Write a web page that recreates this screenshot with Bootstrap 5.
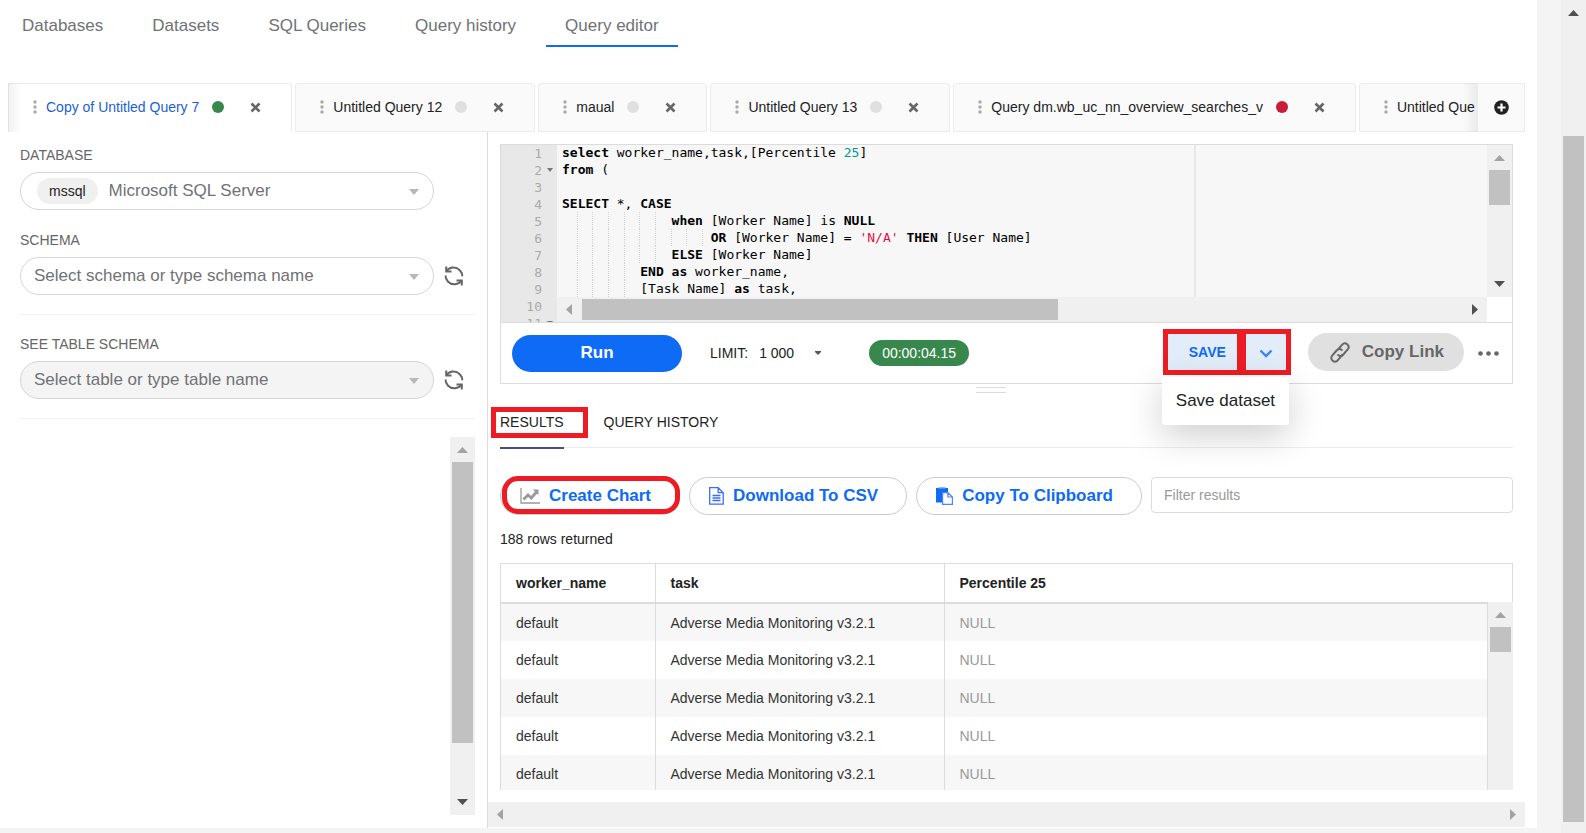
<!DOCTYPE html>
<html lang="en">
<head>
<meta charset="utf-8">
<meta name="viewport" content="width=device-width, initial-scale=1">
<title>Query editor</title>
<link href="https://cdn.jsdelivr.net/npm/bootstrap@5.3.0/dist/css/bootstrap.min.css" rel="stylesheet">
<style>
:root { --ink: #222; --soft: #666; --line: #dcdcdc; --brand: #0d6bf5; --note: #ed1c24; --bar: #f0f0f0; --thumb: #c1c1c1; }
body { font-family: "Liberation Sans", Arial, sans-serif; font-size: 14px; line-height: 20px; color: var(--ink); background: #f4f4f4; }
.app { height: 100vh; }
.page { margin-bottom: 5px; padding-right: 12px; margin-right: 24px; min-width: 0; }

/* top navigation */
.topnav { gap: 11px; padding-left: 3px; margin-bottom: 36px; }
.topnav .nav-link { font-size: 17px; line-height: 20px; color: #707275; padding: 16px 19px 9px; border-bottom: 2px solid transparent; }
.topnav .nav-link.active { border-color: var(--brand); }

/* query tabs */
.strip { margin-left: 8px; height: 49px; }
.strip-scroll { gap: 3px; min-width: 0; }
.strip-scroll::before, .strip-scroll::after { content: ""; position: absolute; top: 0; bottom: 0; width: 14px; z-index: 1; pointer-events: none; }
.strip-scroll::before { left: 0; background: linear-gradient(90deg, rgba(0,0,0,.05), transparent); border-left: 1px solid #e2e2e2; }
.strip-scroll::after { right: 0; background: linear-gradient(270deg, rgba(0,0,0,.06), transparent); }
.qtab { background: #fafafa; border: 1px solid #ececec; border-radius: 3px 3px 0 0; padding: 0 26px 1px 24px; white-space: nowrap; }
.qtab.current { background: #fff; border-bottom-color: #fff; }
.qtab a { font-size: 14px; color: var(--ink); text-decoration: none; margin-left: 9px; }
.qtab.current a { color: #1a5fd8; }
.state { width: 12px; height: 12px; border-radius: 50%; background: #e0e0e0; margin-left: 13px; }
.state.ok { background: #38884d; }
.state.bad { background: #c91c3b; }
.plain { background: none; border: 0; padding: 0; line-height: 0; color: var(--soft); }
.qtab .plain { margin-left: 22px; padding: 4px; }
.add { width: 48px; background: #fafafa; border: 1px solid #ececec; color: var(--ink); }

/* scrollbars */
.sbar { background: var(--bar); color: #505050; flex: none; overflow: hidden; }
.sbar .off { color: #a3a3a3; }
.sbar svg { flex: none; }
.sbar i { background: var(--thumb); }
.sbar.v { width: 25px; display: flex; flex-direction: column; align-items: center; justify-content: space-between; }
.sbar.v i { width: 21px; }
.sbar.h { height: 25px; display: flex; align-items: center; justify-content: space-between; }
.sbar.h i { height: 21px; }
.page-bar { padding-bottom: 11px; }
.page-bar .top { margin-bottom: 111px; }

/* sidebar */
.side { width: 488px; padding: 13px 12px 13px 20px; border-right: 1px solid var(--line); flex: none; }
.side label { font-size: 14px; color: var(--soft); margin-bottom: 7px; }
.combo { height: 38px; border: 1px solid #d5d5d5; border-radius: 19px; flex: 1 1 0; min-width: 0; padding-left: 13px; background: #fff; }
.combo .form-select { height: 36px; border: 0; border-radius: 19px; padding: 0 36px 0 0; font-size: 17px; line-height: 20px; color: #707275; box-shadow: none;
  background: transparent url("data:image/svg+xml,%3Csvg xmlns='http://www.w3.org/2000/svg' viewBox='0 0 10 6'%3E%3Cpath fill='%23b8b8b8' d='M0 0h10L5 6z'/%3E%3C/svg%3E") no-repeat right 14px top 16px / 10px 6px; }
.combo.idle { background: #f4f4f4; }
.engine { background: #f0f0f0; border-radius: 13px; font-size: 14px; line-height: 26px; padding: 0 12px; margin: 0 11px 0 3px; }
.side hr { margin: 19px 0 18px; border-color: #e9e9e9; opacity: .6; }
.side hr + label { margin-top: 1px; }
.refresh { width: 41px; padding-left: 10px; text-align: left; flex: none; }

/* SQL editor */
.work { padding: 12px 12px 0; min-width: 0; }
.panel { border: 1px solid var(--line); }
.sql { height: 178px; border-bottom: 1px solid var(--line); overflow: hidden; font-family: "DejaVu Sans Mono", monospace; font-size: 13px; line-height: 17px; }
.gutter { width: 56px; background: #e8e8e8; color: #aaa; margin: 0; list-style: none; padding: 0; text-align: right; flex: none; }
.gutter li { padding-right: 15px; position: relative; }
.gutter .fold::after { content: ""; position: absolute; right: 4px; top: 6px; border: 3px solid transparent; border-top: 4px solid #777; border-bottom: 0; }
.code-view { background: #f7f7f7; min-width: 0; flex: 1 1 0; }
.code-view pre { margin: -1px 0 0; padding-left: 5px; font: inherit; color: #000; width: 639px; border-right: 2px solid #e8e8e8; overflow: hidden; flex: none; }
.ig { background: linear-gradient(#d0d0d0 50%, transparent 50%) right top / 1px 2px repeat-y; padding: 1px 0; }
.num { color: #099; }
.str { color: #d14; }
.tools { height: 60px; padding: 0 13px 0 11px; }
.run { width: 170px; height: 37px; border-radius: 19px; background: var(--brand); color: #fff; font-size: 17px; font-weight: 700; line-height: 20px; padding: 0; margin-right: 28px; }
.limit-label { font-size: 14px; margin-right: 11px; }
.limit { width: 65px; border: 0; padding: 0; font-size: 14px; line-height: 20px; color: var(--ink); appearance: none; background: url("data:image/svg+xml,%3Csvg xmlns='http://www.w3.org/2000/svg' viewBox='0 0 6 4'%3E%3Cpath fill='%23555' d='M0 0h6v1L3 4 0 1z'/%3E%3C/svg%3E") no-repeat right 3px center / 6px 4px; }
.timer { background: #38884d; color: #fff; border-radius: 13px; line-height: 26px; padding: 0 13px; margin-left: 45px; }
.save, .copy { margin-bottom: 2px; }
.save .btn { height: 46px; border: 5px solid var(--note); border-radius: 0; background: #e3edfa; color: var(--brand); font-size: 14px; font-weight: 700; line-height: 20px; padding: 0; }
.save .btn.main { width: 79px; padding-left: 10px; }
.save .btn.more { width: 50px; margin-left: 0; }
.save .dropdown-menu { top: 48px; left: -1px; min-width: 127px; padding: 14px 0; border: 0; border-radius: 3px; box-shadow: 0 10px 36px rgba(0,0,0,.2); margin: 0; }
.save .dropdown-item { font-size: 17px; line-height: 20px; padding: 0 14px; color: var(--ink); }
.copy { height: 38px; border-radius: 19px; background: #e0e0e0; color: var(--soft); font-size: 17px; font-weight: 700; line-height: 20px; padding: 0 19px 0 21px; margin-right: 14px; margin-left: 17px; gap: 12px; }
.grip-row { padding: 3px 32px 0 0; }
.grip { width: 30px; height: 6px; border: solid var(--line); border-width: 1px 0; margin: 0 auto; }

/* results */
.rtabs { gap: 40px; border-bottom: 1px solid #ececec; height: 55px; }
.rtabs a { color: var(--ink); text-decoration: none; padding-top: 19px; height: 56px; }
.rtabs a.active { border-bottom: 2px solid #45507f; position: relative; }
.rtabs a.active::before { content: ""; position: absolute; inset: 14px -24px 9px -9px; border: 5px solid var(--note); }
.actions { gap: 9px; padding-top: 29px; }
.act { height: 38px; border: 1px solid #ccc; border-radius: 19px; background: #fff; color: var(--brand); font-size: 17px; font-weight: 700; line-height: 20px; padding: 0 28px 0 19px; gap: 9px; white-space: nowrap; }
.act.noted { position: relative; }
.act.noted::before { content: ""; position: absolute; inset: -2px -1px 0 1px; border: 5px solid var(--note); border-radius: 16px; }
.actions .form-control { height: 36px; border-color: var(--line); border-radius: 4px; font-size: 14px; flex: 1 1 0; min-width: 0; color: var(--ink); }
.actions .form-control::placeholder { color: #999; }
.count { margin: 14px 0; }
.grid-box { border: 1px solid var(--line); border-bottom: 0; border-right: 0; overflow: hidden; flex: 1 1 0; min-height: 0; }
.grid-box .table { margin: 0; table-layout: fixed; font-size: 14px; }
.grid-box th, .grid-box td { height: 38px; padding: 0 15px; vertical-align: middle; border: 0; border-right: 1px solid var(--line); color: var(--ink); background: none; box-shadow: none; }
.grid-box thead th { border-bottom: 2px solid var(--line); height: 39px; }
.grid-box tbody tr:nth-child(odd) { background: #f7f7f7; }
.grid-box td { color: #333; }
.grid-box td:last-child { color: #999; }
.c1 { width: 154px; }
.c2 { width: 289px; }
.sbar.grid-bar { position: absolute; right: 0; top: 38px; bottom: 0; width: 26px; border-left: 1px solid var(--line); }
.foot-bar { margin: 12px -12px 1px; }
</style>
</head>
<body>
<svg width="0" height="0" class="position-absolute" aria-hidden="true">
  <symbol id="up" viewBox="0 0 25 25"><path fill="currentColor" d="M7 16h11l-5.500-6z"/></symbol>
  <symbol id="down" viewBox="0 0 25 25"><path fill="currentColor" d="M7 9h11l-5.500 6z"/></symbol>
  <symbol id="left" viewBox="0 0 25 25"><path fill="currentColor" d="M15 7v11l-6-5.500z"/></symbol>
  <symbol id="right" viewBox="0 0 25 25"><path fill="currentColor" d="M10 7v11l6-5.500z"/></symbol>
  <symbol id="dots" viewBox="0 0 4 14"><g fill="#aaa"><circle cx="2" cy="2" r="1.700"/><circle cx="2" cy="7" r="1.700"/><circle cx="2" cy="12" r="1.700"/></g></symbol>
  <symbol id="x" viewBox="0 0 11 11"><path d="M1.500 1.500l8 8M9.500 1.500l-8 8" stroke="currentColor" stroke-width="2.600"/></symbol>
  <symbol id="sync" viewBox="0 0 20 20"><g fill="none" stroke="#666" stroke-width="2"><path d="M2.500 5C5.500 .6 12 .2 15.800 4.200c1.600 1.700 2.500 3.700 2.500 6"/><path d="M2.200 .6v5h5.300"/><path d="M1.500 9.500c0 2.400 1 4.600 2.600 6.200 3.800 3.900 10.500 3.400 13.400-.9"/><path d="M17.800 19.400v-5h-5.300"/></g></symbol>
</svg>

<div class="app d-flex overflow-hidden">
  <main class="page bg-white flex-grow-1 d-flex flex-column">
    <nav class="nav topnav flex-nowrap">
      <a class="nav-link" href="#">Databases</a>
      <a class="nav-link" href="#">Datasets</a>
      <a class="nav-link" href="#">SQL Queries</a>
      <a class="nav-link" href="#">Query history</a>
      <a class="nav-link active" href="#" aria-current="page">Query editor</a>
    </nav>

    <div class="strip d-flex flex-shrink-0">
      <div class="strip-scroll d-flex flex-grow-1 overflow-hidden position-relative">
        <div class="qtab current d-flex align-items-center flex-shrink-0"><svg width="4" height="14"><use href="#dots"/></svg><a href="#">Copy of Untitled Query 7</a><span class="state ok"></span><button class="plain" aria-label="Close"><svg width="11" height="11"><use href="#x"/></svg></button></div>
        <div class="qtab d-flex align-items-center flex-shrink-0"><svg width="4" height="14"><use href="#dots"/></svg><a href="#">Untitled Query 12</a><span class="state"></span><button class="plain" aria-label="Close"><svg width="11" height="11"><use href="#x"/></svg></button></div>
        <div class="qtab d-flex align-items-center flex-shrink-0"><svg width="4" height="14"><use href="#dots"/></svg><a href="#">maual</a><span class="state"></span><button class="plain" aria-label="Close"><svg width="11" height="11"><use href="#x"/></svg></button></div>
        <div class="qtab d-flex align-items-center flex-shrink-0"><svg width="4" height="14"><use href="#dots"/></svg><a href="#">Untitled Query 13</a><span class="state"></span><button class="plain" aria-label="Close"><svg width="11" height="11"><use href="#x"/></svg></button></div>
        <div class="qtab d-flex align-items-center flex-shrink-0"><svg width="4" height="14"><use href="#dots"/></svg><a href="#">Query dm.wb_uc_nn_overview_searches_v</a><span class="state bad"></span><button class="plain" aria-label="Close"><svg width="11" height="11"><use href="#x"/></svg></button></div>
        <div class="qtab d-flex align-items-center flex-shrink-0"><svg width="4" height="14"><use href="#dots"/></svg><a href="#">Untitled Que</a></div>
      </div>
      <button class="plain add flex-shrink-0" aria-label="New query"><svg width="15" height="15" viewBox="0 0 15 15"><circle cx="7.500" cy="7.500" r="7.300" fill="#222"/><path d="M7.500 3.500v8M3.500 7.500h8" stroke="#fff" stroke-width="2.200"/></svg></button>
    </div>

    <div class="d-flex flex-grow-1 overflow-hidden">
      <aside class="side d-flex flex-column">
        <label for="db">DATABASE</label>
        <div class="d-flex mb-1">
          <div class="combo d-flex align-items-center"><span class="engine">mssql</span><select id="db" class="form-select"><option>Microsoft SQL Server</option></select></div>
          <span class="refresh"></span>
        </div>
        <label for="schema" class="mt-3">SCHEMA</label>
        <div class="d-flex align-items-center">
          <div class="combo"><select id="schema" class="form-select"><option>Select schema or type schema name</option></select></div>
          <button class="plain refresh" aria-label="Refresh schemas"><svg width="20" height="20"><use href="#sync"/></svg></button>
        </div>
        <hr>
        <label for="tbl">SEE TABLE SCHEMA</label>
        <div class="d-flex align-items-center">
          <div class="combo idle"><select id="tbl" class="form-select"><option>Select table or type table name</option></select></div>
          <button class="plain refresh" aria-label="Refresh tables"><svg width="20" height="20"><use href="#sync"/></svg></button>
        </div>
        <hr>
        <div class="sbar v flex-grow-1 align-self-end">
          <svg class="off" width="25" height="25"><use href="#up"/></svg>
          <i style="height:74.400%" class="mb-auto"></i>
          <svg width="25" height="25"><use href="#down"/></svg>
        </div>
      </aside>

      <section class="work flex-grow-1 d-flex flex-column">
        <div class="panel">
          <div class="sql d-flex">
            <ol class="gutter"><li>1</li><li class="fold">2</li><li>3</li><li>4</li><li>5</li><li>6</li><li>7</li><li>8</li><li>9</li><li>10</li><li class="fold">11</li></ol>
            <div class="d-flex flex-column flex-grow-1">
              <div class="d-flex flex-grow-1 overflow-hidden">
                <div class="code-view d-flex"><pre><b>select</b> worker_name,task,[Percentile <span class="num">25</span>]
<b>from</b> (

<b>SELECT</b> *, <b>CASE</b>
<span class="ig">  </span><span class="ig">  </span><span class="ig">  </span><span class="ig">  </span><span class="ig">  </span><span class="ig">  </span>  <b>when</b> [Worker Name] is <b>NULL</b>
<span class="ig">  </span><span class="ig">  </span><span class="ig">  </span><span class="ig">  </span><span class="ig">  </span><span class="ig">  </span><span class="ig">  </span><span class="ig">  </span><span class="ig">  </span> <b>OR</b> [Worker Name] = <span class="str">'N/A'</span> <b>THEN</b> [User Name]
<span class="ig">  </span><span class="ig">  </span><span class="ig">  </span><span class="ig">  </span><span class="ig">  </span><span class="ig">  </span>  <b>ELSE</b> [Worker Name]
<span class="ig">  </span><span class="ig">  </span><span class="ig">  </span><span class="ig">  </span>  <b>END</b> <b>as</b> worker_name,
<span class="ig">  </span><span class="ig">  </span><span class="ig">  </span><span class="ig">  </span>  [Task Name] <b>as</b> task,</pre></div>
                <div class="sbar v">
                  <svg class="off" width="25" height="25"><use href="#up"/></svg>
                  <i style="height:23%" class="mb-auto"></i>
                  <svg width="25" height="25"><use href="#down"/></svg>
                </div>
              </div>
              <div class="d-flex">
                <div class="sbar h flex-grow-1">
                  <svg class="off" width="25" height="25"><use href="#left"/></svg>
                  <i style="width:51.200%" class="me-auto"></i>
                  <svg width="25" height="25"><use href="#right"/></svg>
                </div>
                <div style="width:25px"></div>
              </div>
            </div>
          </div>
          <div class="tools d-flex align-items-center">
            <button class="btn run">Run</button>
            <label for="limit" class="limit-label">LIMIT:</label>
            <select id="limit" class="limit"><option>1 000</option></select>
            <span class="timer">00:00:04.15</span>
            <div class="save btn-group ms-auto position-relative">
              <button class="btn main">SAVE</button>
              <button class="btn more" aria-label="More save options" aria-expanded="true"><svg width="14" height="9" viewBox="0 0 14 9"><path d="M1.500 1.500L7 7l5.500-5.500" fill="none" stroke="#3b86f7" stroke-width="2.400"/></svg></button>
              <div class="dropdown-menu show"><a class="dropdown-item" href="#">Save dataset</a></div>
            </div>
            <button class="btn copy d-flex align-items-center"><svg width="20" height="21" viewBox="0 0 20 21" fill="none" stroke="#666" stroke-width="2" stroke-linecap="round"><path d="M8 7.500l4-4.700c1.500-1.700 3.600-1.900 5.200-.6 1.700 1.400 1.800 3.600.5 5.200l-4.400 5.100c-1.400 1.600-3.500 1.800-5.200.5"/><path d="M11.900 13.400l-4 4.800c-1.400 1.700-3.600 1.900-5.200.6-1.700-1.400-1.900-3.600-.5-5.200l4.400-5.100c1.400-1.600 3.500-1.800 5.200-.5"/></svg>Copy Link</button>
            <button class="plain" aria-label="More"><svg width="21" height="5" viewBox="0 0 21 5" fill="#666"><circle cx="2.500" cy="2.500" r="2.300"/><circle cx="10.500" cy="2.500" r="2.300"/><circle cx="18.500" cy="2.500" r="2.300"/></svg></button>
          </div>
        </div>
        <div class="grip-row"><div class="grip"></div></div>

        <nav class="rtabs d-flex flex-shrink-0"><a class="active" href="#">RESULTS</a><a href="#">QUERY HISTORY</a></nav>

        <div class="actions d-flex">
          <button class="btn act noted d-flex align-items-center"><svg width="20" height="16" viewBox="0 0 20 16" fill="none" stroke="#999"><path d="M1 0v15h19" stroke-width="1.300"/><path d="M3.500 11.500L8 7l3.300 3L16.500 4" stroke-width="2.800"/><path d="M12.800 1.500h5.700v5.700z" fill="#999" stroke="none"/></svg>Create Chart</button>
          <button class="btn act d-flex align-items-center"><svg width="15" height="18" viewBox="0 0 15 18" fill="none" stroke="#3b6df6" stroke-width="1.300"><path d="M.7.700h8.500l5 5v11.500H.7zM9.200.700v5h5M3.500 8.500h8M3.500 11h8M3.500 13.500h8"/></svg>Download To CSV</button>
          <button class="btn act d-flex align-items-center"><svg width="17" height="18" viewBox="0 0 17 18"><path d="M0 1h12v4H6v10.500H0z" fill="#0d6bf5"/><path d="M2.500 0h7v1.500h-7z" fill="#8fb8fa"/><path d="M6.600 5.600h5.300l4.500 4.400v7.400H6.600zM11.900 5.600V10h4.500" fill="#fff" stroke="#4d83f5" stroke-width="1.200"/></svg>Copy To Clipboard</button>
          <input class="form-control" type="text" placeholder="Filter results" aria-label="Filter results">
        </div>
        <p class="count">188 rows returned</p>

        <div class="grid-box position-relative">
          <table class="table">
            <thead><tr><th class="c1">worker_name</th><th class="c2">task</th><th>Percentile 25</th></tr></thead>
            <tbody>
              <tr><td>default</td><td>Adverse Media Monitoring v3.2.1</td><td>NULL</td></tr>
              <tr><td>default</td><td>Adverse Media Monitoring v3.2.1</td><td>NULL</td></tr>
              <tr><td>default</td><td>Adverse Media Monitoring v3.2.1</td><td>NULL</td></tr>
              <tr><td>default</td><td>Adverse Media Monitoring v3.2.1</td><td>NULL</td></tr>
              <tr><td>default</td><td>Adverse Media Monitoring v3.2.1</td><td>NULL</td></tr>
            </tbody>
          </table>
          <div class="sbar v grid-bar">
            <svg class="off" width="25" height="25"><use href="#up"/></svg>
            <i style="height:13.400%" class="mb-auto"></i>
          </div>
        </div>
        <div class="sbar h foot-bar">
          <svg class="off" width="25" height="25"><use href="#left"/></svg>
          <svg class="off" width="25" height="25"><use href="#right"/></svg>
        </div>
      </section>
    </div>
  </main>
  <div class="sbar v page-bar">
    <svg class="top" width="25" height="25"><use href="#up"/></svg>
    <i class="flex-grow-1"></i>
  </div>
</div>
<script src="https://cdn.jsdelivr.net/npm/bootstrap@5.3.0/dist/js/bootstrap.bundle.min.js"></script>
</body>
</html>
